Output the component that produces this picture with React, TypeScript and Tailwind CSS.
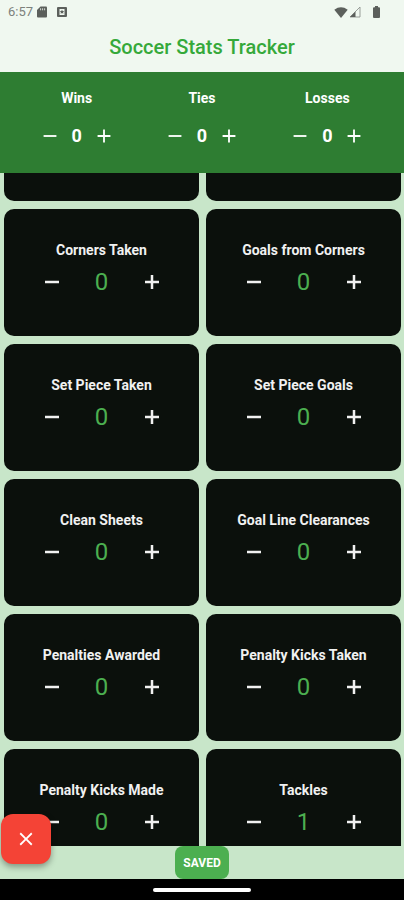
import { useState } from "react";

type Stat = { name: string; value: number };

const RECORD = ["Wins", "Ties", "Losses"];

const STATS: Stat[] = [
  { name: "Corners Taken", value: 0 },
  { name: "Goals from Corners", value: 0 },
  { name: "Set Piece Taken", value: 0 },
  { name: "Set Piece Goals", value: 0 },
  { name: "Clean Sheets", value: 0 },
  { name: "Goal Line Clearances", value: 0 },
  { name: "Penalties Awarded", value: 0 },
  { name: "Penalty Kicks Taken", value: 0 },
  { name: "Penalty Kicks Made", value: 0 },
  { name: "Tackles", value: 1 },
];

function Minus({ className }: { className: string }) {
  return (
    <svg viewBox="0 0 24 24" fill="none" stroke="currentColor" className={className} aria-hidden="true">
      <path d="M5 12h14" />
    </svg>
  );
}

function Plus({ className }: { className: string }) {
  return (
    <svg viewBox="0 0 24 24" fill="none" stroke="currentColor" className={className} aria-hidden="true">
      <path d="M5 12h14M12 5v14" />
    </svg>
  );
}

function StatusBar() {
  return (
    <div className="flex h-6 items-center justify-between pl-2 pr-6 text-[#5c605c]">
      <div className="flex items-center">
        <span className="w-7 text-[13px] leading-4 text-[#7c817c]">6:57</span>
        <svg viewBox="0 0 10 12" className="ml-px h-3 w-2.5" fill="currentColor" aria-hidden="true">
          <path d="M3.5 .5H9q1 0 1 1v9q0 1-1 1H1q-1 0-1-1V4z" />
          <path d="M3.6 2.3v2M5.6 2.3v2M7.6 2.3v2" stroke="#f0f8f0" strokeWidth=".8" />
        </svg>
        <svg viewBox="0 0 10 10" className="ml-2.5 size-2.5" aria-hidden="true">
          <path fill="currentColor" fillRule="evenodd" d="M1 0h8q1 0 1 1v8q0 1-1 1H1q-1 0-1-1V1q0-1 1-1zm1.500 2v6h5V2z" />
          <path fill="currentColor" d="M5 2.800l.7 1.300 1.500.2-1.100 1 .3 1.500L5 6.100l-1.400.7.3-1.500-1.100-1 1.500-.2z" />
        </svg>
      </div>
      <div className="flex items-center">
        <svg viewBox="0 0 14 11" className="h-[11px] w-3.5" fill="currentColor" aria-hidden="true">
          <path d="M7 11L.3 2.700Q7-2.200 13.700 2.700z" />
        </svg>
        <svg viewBox="0 0 12 12" className="ml-px size-3" aria-hidden="true">
          <path d="M11 1v10H1z" fill="none" stroke="#8f948f" strokeWidth=".9" />
          <path d="M6.500 5.500V11H1z" fill="#5c605c" />
        </svg>
        <svg viewBox="0 0 7 12" className="ml-3 h-3 w-[7px]" fill="currentColor" aria-hidden="true">
          <path d="M2 0h3v1.200h1q1 0 1 1V11q0 1-1 1H1q-1 0-1-1V2.200q0-1 1-1h1z" />
        </svg>
      </div>
    </div>
  );
}

function RecordCounter({ name }: { name: string }) {
  const [value, setValue] = useState(0);
  return (
    <div className="flex flex-col items-center text-white">
      <h2 className="text-sm leading-4 font-bold">{name}</h2>
      <div className="mt-[18px] flex items-center">
        <button type="button" aria-label={`Decrease ${name}`} onClick={() => setValue(Math.max(0, value - 1))}>
          <Minus className="size-[22px] stroke-2" />
        </button>
        <span className="w-8 text-center text-lg leading-6 font-bold">{value}</span>
        <button type="button" aria-label={`Increase ${name}`} onClick={() => setValue(value + 1)}>
          <Plus className="size-[22px] stroke-2" />
        </button>
      </div>
    </div>
  );
}

function StatCard({ stat }: { stat: Stat }) {
  const [value, setValue] = useState(stat.value);
  return (
    <article className="flex h-[127px] flex-col items-center rounded-[10px] bg-[#0b100c] pt-[33px] text-[#f1f1f1]">
      <h3 className="text-sm leading-4 font-bold">{stat.name}</h3>
      <div className="mt-2.5 flex items-center">
        <button type="button" aria-label={`Decrease ${stat.name}`} onClick={() => setValue(Math.max(0, value - 1))}>
          <Minus className="size-6 stroke-[2.5]" />
        </button>
        <span className="w-[76px] text-center text-2xl leading-7 text-[#4caf50]">{value}</span>
        <button type="button" aria-label={`Increase ${stat.name}`} onClick={() => setValue(value + 1)}>
          <Plus className="size-6 stroke-[2.5]" />
        </button>
      </div>
    </article>
  );
}

export default function App() {
  return (
    <div className="relative flex h-screen flex-col overflow-hidden bg-[#c8e6c9] font-['Roboto',sans-serif]">
      <header className="h-[72px] shrink-0 bg-[#f0f8f0]">
        <StatusBar />
        <h1 className="mt-[11px] text-center text-xl leading-6 font-medium text-[#35a93a]">Soccer Stats Tracker</h1>
      </header>

      <section className="grid h-[101px] shrink-0 grid-cols-3 bg-[#2e7d32] px-3.5 pt-[18px]">
        {RECORD.map((name) => (
          <RecordCounter key={name} name={name} />
        ))}
      </section>

      <main className="min-h-0 flex-1 overflow-hidden">
        <div className="grid grid-cols-2 gap-x-[7px] gap-y-2 pr-[3px] pl-1">
          <div className="h-7 rounded-b-[10px] bg-[#0b100c]" />
          <div className="h-7 rounded-b-[10px] bg-[#0b100c]" />
          {STATS.map((stat) => (
            <StatCard key={stat.name} stat={stat} />
          ))}
        </div>
      </main>

      <div className="flex h-[33px] shrink-0 justify-center">
        <button type="button" className="w-[54px] rounded-lg bg-[#4caf50] text-xs leading-4 font-bold text-white">
          SAVED
        </button>
      </div>

      <div className="flex h-[21px] shrink-0 items-center justify-center bg-black">
        <div className="h-1 w-[98px] rounded-full bg-white" />
      </div>

      <button
        type="button"
        aria-label="Close"
        className="absolute bottom-9 left-px flex size-[50px] items-center justify-center rounded-xl bg-[#f44336] text-white shadow-[0_3px_6px_rgba(0,0,0,0.35)]"
      >
        <svg viewBox="0 0 24 24" className="size-[22px]" fill="currentColor" aria-hidden="true">
          <path d="M19 6.410L17.590 5 12 10.590 6.410 5 5 6.410 10.590 12 5 17.590 6.410 19 12 13.410 17.590 19 19 17.590 13.410 12z" />
        </svg>
      </button>
    </div>
  );
}
